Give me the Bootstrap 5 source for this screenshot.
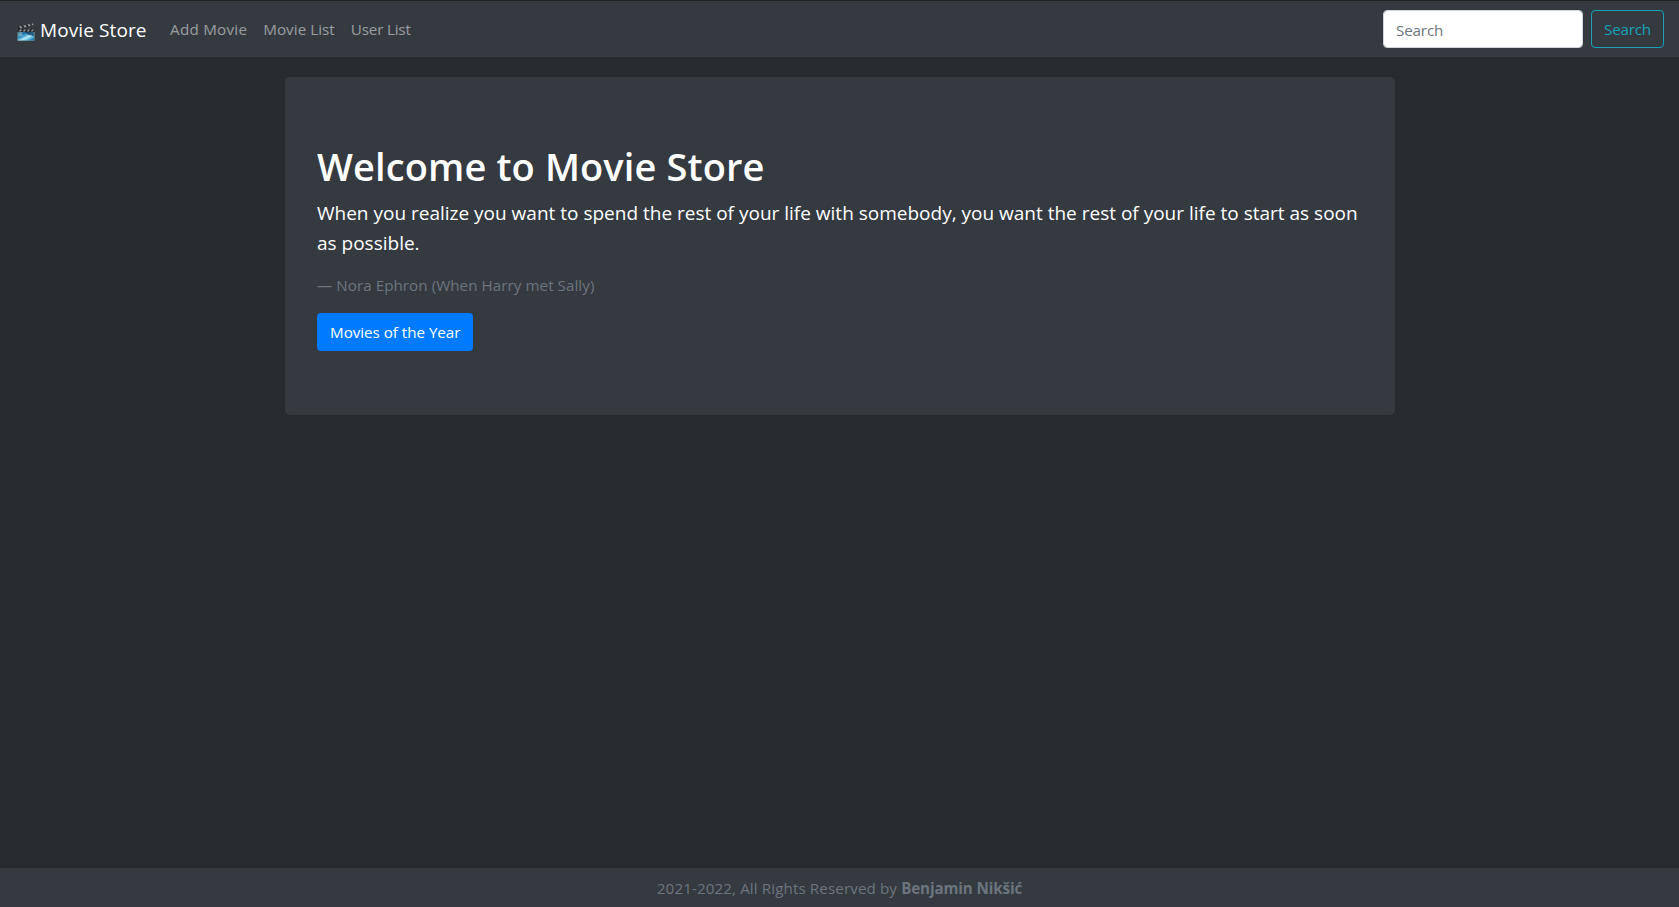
<!DOCTYPE html>
<html lang="en">
<head>
<meta charset="utf-8">
<meta name="viewport" content="width=device-width, initial-scale=1">
<title>Movie Store</title>
<link href="https://cdn.jsdelivr.net/npm/bootstrap@5.3.0/dist/css/bootstrap.min.css" rel="stylesheet">
<style>
body{background:#272b2f;color:#fff;font-family:"Open Sans","Noto Sans",sans-serif;font-size:15.2px;line-height:24px;border-top:1px solid #222}
.site-bar{background:#343a40;height:56px;padding:0 15px 0 17px}
.site-bar .navbar-brand{font-size:19px;line-height:30px;letter-spacing:.1px;gap:5px;padding-top:1px;margin-right:15.500px}
.brand-icon{margin-top:5px}
.site-bar .nav-link{color:rgba(255,255,255,.5);line-height:24px}
.nav-add{letter-spacing:.25px}
.nav-movies{letter-spacing:.05px}
.nav-users{letter-spacing:-.18px}
.search-box{width:200px;height:38px;border:1px solid #ced4da;border-radius:4px;font-size:15.2px;line-height:24px;letter-spacing:-.15px;padding-top:7px}
.search-box::placeholder{color:#6c757d}
.btn{font-size:15.2px;line-height:24px;height:38px;border-radius:4px}
.btn-search{color:#17a2b8;border-color:#17a2b8;letter-spacing:-.18px}
.btn-year{background:#007bff;color:#fff;letter-spacing:-.03px}
.hero{background:#343a40;width:1110px;height:338px;margin-top:20px;padding:65px 31px 63px 32.500px;border-radius:5px}
.hero h1{font-size:38px;line-height:48px;font-weight:600;letter-spacing:.12px}
.hero-quote{font-size:19px;line-height:30px;margin-bottom:15px}
.hero-cite{letter-spacing:.05px}
.dim{color:#6c757d}
.site-foot{background:#343a40;height:39px;letter-spacing:.1px}
.site-foot b{letter-spacing:-.12px}
</style>
</head>
<body class="d-flex flex-column vh-100 overflow-hidden">
<nav class="navbar navbar-expand site-bar">
  <a class="navbar-brand d-flex align-items-center text-white pb-0" href="#">
    <svg class="brand-icon" width="18" height="18" viewBox="0 0 18 18">
      <defs><linearGradient id="slate" x1="0" y1="0" x2="1" y2="1"><stop offset="0" stop-color="#123d61"/><stop offset=".35" stop-color="#2889bd"/><stop offset=".6" stop-color="#b9ecfa"/><stop offset=".8" stop-color="#3ba5d2"/><stop offset="1" stop-color="#124b74"/></linearGradient></defs>
      <path d="M.7 3.8 16 .3l.6 2.4L1.3 6.2z" fill="#24282c"/>
      <path d="m2 3.6 2.2-.5 1.3 1.8-2.2.5zM6.2 2.6l2.2-.5 1.3 1.8-2.2.5zM10.4 1.6l2.2-.5 1.3 1.8-2.2.5zM14.3.7 16 .3l.6 2-1.2.2z" fill="#92999c"/>
      <path d="M1 6.3h16V9H1z" fill="#22272b"/>
      <path d="m3 6.4h2L3.8 8.600h-2zM7 6.400h2L7.800 8.600h-2zM11 6.400h2l-1.200 2.200h-2zM15 6.400h1.800l-1.200 2.200h-1.800z" fill="#8e969a"/>
      <path d="M.8 9h16.400v8.600H.8z" fill="url(#slate)"/>
      <path d="M1.200 9.300h5L4.500 11l2 1.500-5.300 1z" fill="#a5cbd9" opacity=".6"/>
      <path d="M8 9h9v4.500C13.500 11.500 11 13 8 9z" fill="#103e65" opacity=".8"/>
      <path d="M.8 17.600V9M17.200 9v8.600H.8" fill="none" stroke="#7fa8b9" stroke-width=".5"/>
    </svg>
    <span>Movie Store</span>
  </a>
  <div class="navbar-nav me-auto">
    <a class="nav-link nav-add" href="#">Add Movie</a>
    <a class="nav-link nav-movies" href="#">Movie List</a>
    <a class="nav-link nav-users" href="#">User List</a>
  </div>
  <form class="d-flex gap-2">
    <input class="form-control search-box" type="search" placeholder="Search" aria-label="Search">
    <button class="btn btn-search" type="button">Search</button>
  </form>
</nav>
<main class="flex-grow-1">
  <section class="hero mx-auto">
    <h1 class="mb-2">Welcome to Movie Store</h1>
    <p class="hero-quote">When you realize you want to spend the rest of your life with somebody, you want the rest of your life to start as soon<br>as possible.</p>
    <p class="dim hero-cite mb-3">— Nora Ephron (When Harry met Sally)</p>
    <a class="btn btn-year" href="#">Movies of the Year</a>
  </section>
</main>
<footer class="site-foot dim text-center py-2">2021-2022, All Rights Reserved by <b>Benjamin Nikšić</b></footer>
<script src="https://cdn.jsdelivr.net/npm/bootstrap@5.3.0/dist/js/bootstrap.bundle.min.js"></script>
</body>
</html>
